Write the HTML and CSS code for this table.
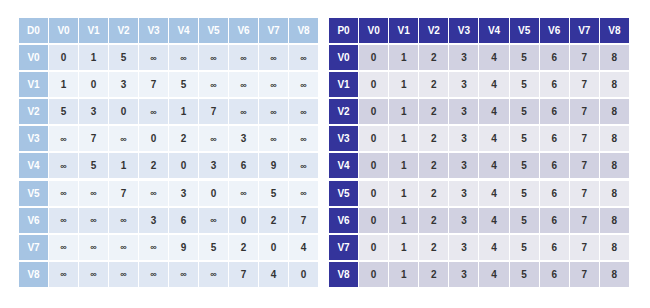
FILE: index.html
```html
<!DOCTYPE html>
<html lang="en">
<head>
  <meta charset="UTF-8" />
  <title>Floyd D0 / P0</title>
  <link rel="stylesheet" href="styles.css">
</head>
<body>
  <main class="tables">
    <div class="grid dist" id="distGrid"></div>
    <div class="grid path" id="pathGrid"></div>
  </main>

  <script>
    const INF = "∞";
    const dist = [
      [0, 1, 5, INF, INF, INF, INF, INF, INF],
      [1, 0, 3, 7, 5, INF, INF, INF, INF],
      [5, 3, 0, INF, 1, 7, INF, INF, INF],
      [INF, 7, INF, 0, 2, INF, 3, INF, INF],
      [INF, 5, 1, 2, 0, 3, 6, 9, INF],
      [INF, INF, 7, INF, 3, 0, INF, 5, INF],
      [INF, INF, INF, 3, 6, INF, 0, 2, 7],
      [INF, INF, INF, INF, 9, 5, 2, 0, 4],
      [INF, INF, INF, INF, INF, INF, 7, 4, 0]
    ];
    const path = [];
    for (let i = 0; i < 9; i++) {
      path.push([0, 1, 2, 3, 4, 5, 6, 7, 8]);
    }

    function buildGrid(el, title, data) {
      const head = document.createElement("div");
      head.className = "cell head";
      head.textContent = title;
      el.appendChild(head);
      for (let j = 0; j < 9; j++) {
        const c = document.createElement("div");
        c.className = "cell head";
        c.textContent = "V" + j;
        el.appendChild(c);
      }
      data.forEach((row, i) => {
        const rh = document.createElement("div");
        rh.className = "cell head";
        rh.textContent = "V" + i;
        el.appendChild(rh);
        row.forEach(v => {
          const c = document.createElement("div");
          c.className = "cell " + (i % 2 === 0 ? "even" : "odd");
          if (v === INF) c.classList.add("inf");
          c.textContent = v;
          el.appendChild(c);
        });
      });
    }

    buildGrid(document.getElementById("distGrid"), "D0", dist);
    buildGrid(document.getElementById("pathGrid"), "P0", path);
  </script>
</body>
</html>
```

FILE: styles.css
```css
body {
  background: #fff;
  margin: 0;
  padding: 0;
  font-family: 'Liberation Sans', Arial, sans-serif;
}

.tables {
  display: flex;
  gap: 11px;
  padding: 18px 0 0 19px;
}

.grid {
  display: grid;
  grid-template-columns: repeat(10, 29px);
  grid-auto-rows: 25px;
  column-gap: 1px;
  row-gap: 2.1px;
}

.path {
  grid-template-columns: repeat(10, 29.1px);
}

.cell {
  display: flex;
  align-items: center;
  justify-content: center;
  font-size: 10px;
  font-weight: bold;
  color: #333;
}

.cell.inf {
  font-size: 9px;
}

.dist .head {
  background: #a6c4e3;
  color: #fff;
}

.dist .even {
  background: #dfe7f3;
}

.dist .odd {
  background: #eef3f9;
}

.path .head {
  background: #34349b;
  color: #fff;
}

.path .even {
  background: #d1d1e1;
}

.path .odd {
  background: #e8e8ef;
}
```
